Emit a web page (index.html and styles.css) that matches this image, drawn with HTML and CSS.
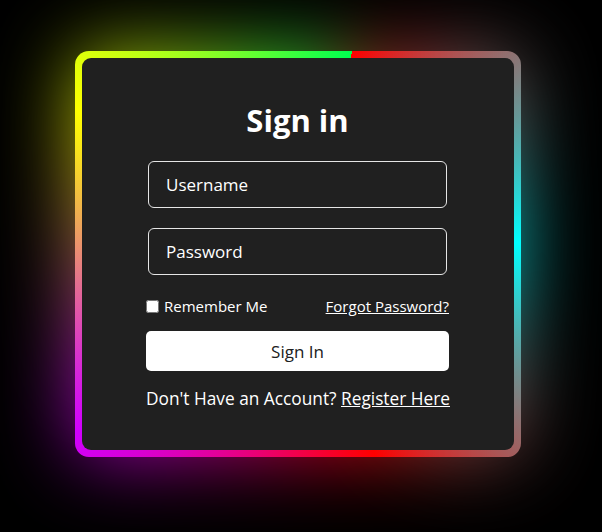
FILE: index.html
```html
<!DOCTYPE html>
<html lang="en">
<head>
<meta charset="utf-8">
<title>Sign in</title>
<link rel="stylesheet" href="styles.css">
</head>
<body>
  <div class="frame">
    <div class="card">
      <h1 class="title">Sign in</h1>
      <form class="form">
        <input class="field" type="text" placeholder="Username">
        <input class="field field-gap" type="password" placeholder="Password">
        <div class="options">
          <label class="remember"><input type="checkbox" class="check">Remember Me</label>
          <a href="#" class="link">Forgot Password?</a>
        </div>
        <button type="button" class="submit">Sign In</button>
        <p class="register">Don't Have an Account? <a href="#" class="link">Register Here</a></p>
      </form>
    </div>
  </div>
</body>
</html>
```
FILE: styles.css
```css
* { box-sizing: border-box; }
html { margin: 0; background: #000; }
body {
  margin: 0;
  width: 602px;
  height: 532px;
  padding: 51px 0 0 75px;
  font-family: "Open Sans", "Noto Sans", sans-serif;
  color: #fff;
  overflow: hidden;
}
.frame {
  position: relative;
  width: 446px;
  height: 406px;
  padding: 7px;
  border-radius: 14px;
  background: conic-gradient(from 15deg, #f00, #0ff, #f00, #d000ff, #ff0, #00ff50);
}
.frame::before {
  content: "";
  position: absolute;
  inset: 0;
  border-radius: 14px;
  background: conic-gradient(from 15deg, #f00, #0ff, #f00, #d000ff, #ff0, #00ff50);
  filter: blur(40px);
  opacity: 0.75;
  z-index: -1;
}
.card {
  height: 392px;
  padding-right: 1px;
  background: #202020;
  border-radius: 9px;
  display: flex;
  flex-direction: column;
  align-items: center;
}
.title {
  margin: 41px 0 0;
  font-size: 31px;
  line-height: 42px;
  font-weight: 700;
}
.form {
  width: 303px;
  margin-top: 20px;
  display: flex;
  flex-direction: column;
  align-items: center;
}
.field {
  width: 299px;
  height: 47px;
  border: 1px solid #e6e6e6;
  border-radius: 6px;
  background: transparent;
  color: #fff;
  font-family: inherit;
  font-size: 17px;
  padding: 0 17px;
  outline: none;
}
.field::placeholder { color: #fff; opacity: 1; }
.field-gap { margin-top: 20px; }
.options {
  width: 100%;
  margin-top: 21px;
  display: flex;
  justify-content: space-between;
  align-items: center;
  font-size: 15px;
  line-height: 20px;
}
.remember { display: flex; align-items: center; }
.check { width: 13px; height: 13px; margin: 0 5px 0 0; }
.link { color: #fff; text-decoration: underline; }
.submit {
  width: 100%;
  height: 40px;
  margin-top: 15px;
  border: none;
  border-radius: 5px;
  background: #fff;
  color: #202020;
  font-family: inherit;
  font-size: 17px;
}
.register {
  width: 100%;
  margin: 16px 0 0;
  font-size: 17.3px;
  line-height: 24px;
  white-space: nowrap;
}
```
